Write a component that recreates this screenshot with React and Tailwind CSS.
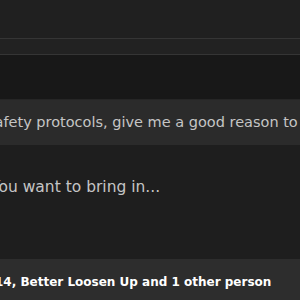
export default function App() {
  return (
    <div className="w-[300px] h-[300px] overflow-hidden bg-[#1e1e1e] font-['DejaVu_Sans',sans-serif] text-[15px]">
      <div className="h-[38px] bg-[#202020]" />
      <div className="h-[17px] bg-[#222222] border-y border-[#353535]" />
      <div className="h-[45px] bg-[#181818] border-b border-[#262626]" />

      {/* quoted message */}
      <div className="h-[45px] bg-[#2b2b2b] flex items-center overflow-hidden">
        <p className="whitespace-nowrap ml-[-13px] text-[14.5px] text-[#c5c5c5]">
          safety protocols, give me a good reason to let you through
        </p>
      </div>

      {/* reply */}
      <div className="h-[114px] pt-[31px] overflow-hidden">
        <p className="whitespace-nowrap ml-[-9px] text-[15.5px] text-[#c5c5c5]">
          You want to bring in...
        </p>
      </div>

      {/* likes bar */}
      <div className="h-[41px] pt-[4px] bg-[#2d2d2d] flex items-center overflow-hidden">
        <p className="whitespace-nowrap ml-[-5px] text-[12px] font-bold text-white">
          14, Better Loosen Up and 1 other person
        </p>
      </div>
    </div>
  );
}
